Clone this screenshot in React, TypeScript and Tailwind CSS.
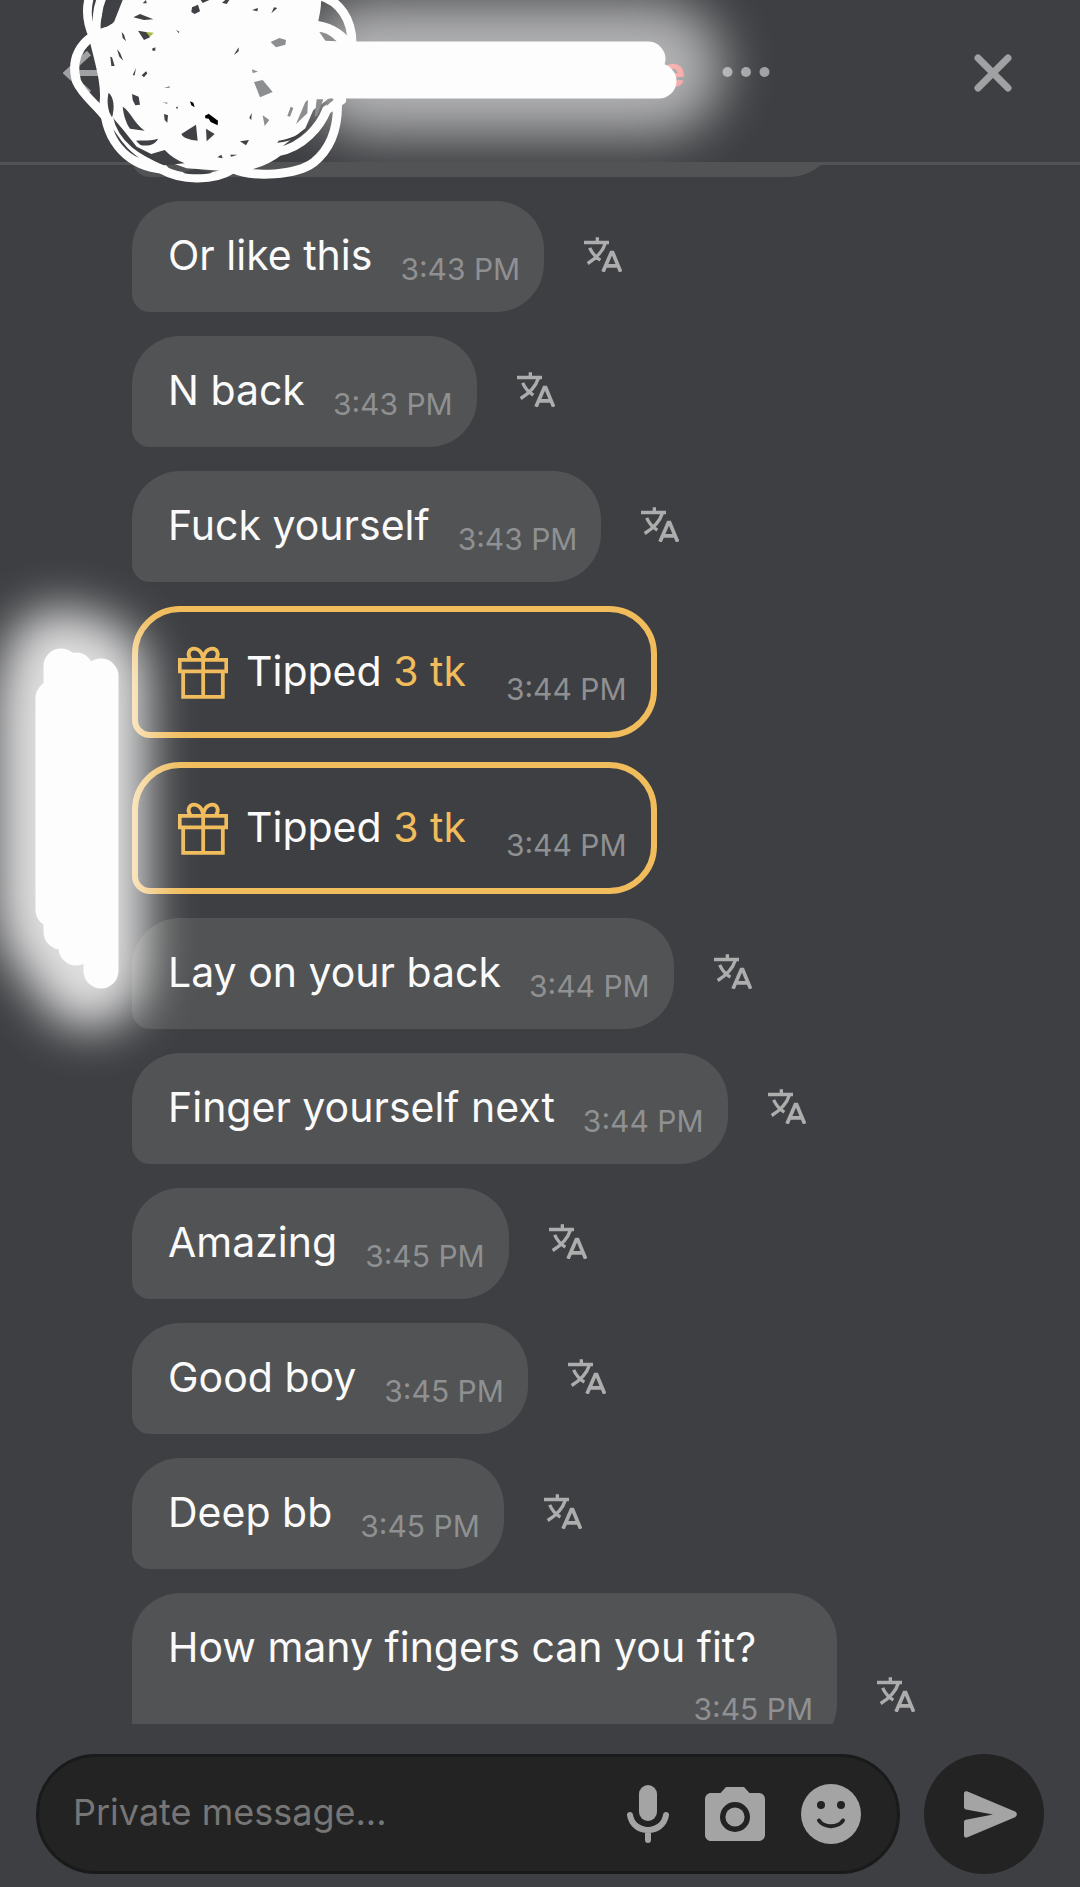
import type { ReactNode } from 'react';

type Message = {
  text: string;
  time: string;
  tip?: string;
};

const messages: Message[] = [
  { text: 'Or like this', time: '3:43 PM' },
  { text: 'N back', time: '3:43 PM' },
  { text: 'Fuck yourself', time: '3:43 PM' },
  { text: 'Tipped', tip: '3 tk', time: '3:44 PM' },
  { text: 'Tipped', tip: '3 tk', time: '3:44 PM' },
  { text: 'Lay on your back', time: '3:44 PM' },
  { text: 'Finger yourself next', time: '3:44 PM' },
  { text: 'Amazing', time: '3:45 PM' },
  { text: 'Good boy', time: '3:45 PM' },
  { text: 'Deep bb', time: '3:45 PM' },
  { text: 'How many fingers can you fit?', time: '3:45 PM' },
];

function TranslateIcon() {
  return (
    <svg viewBox="48 52 114 104" className="w-[38px] h-[35px]" fill="none" stroke="currentColor" strokeWidth="10">
      <path d="M48 68H123M88 52V68M112 70C104 96 86 114 59 131M65 84C72 100 83 112 97 121" />
      <path d="M105 156L130 98H134L158 156M113 138H151" strokeWidth="11" />
    </svg>
  );
}

function GiftIcon() {
  return (
    <svg viewBox="167 169 145 153" className="w-[50px] h-[53px] shrink-0" fill="none" stroke="currentColor" strokeWidth="11">
      <path d="M172 209H307V242H172ZM182 242V316H297V242M240 205V316" />
      <path d="M203 207C192 192 200 176 213 176C228 176 238 190 240 205C242 190 252 176 267 176C280 176 288 192 277 207" />
    </svg>
  );
}

function IconButton({ label, className = '', children }: { label: string; className?: string; children: ReactNode }) {
  return (
    <button type="button" aria-label={label} className={`flex shrink-0 items-center justify-center ${className}`}>
      {children}
    </button>
  );
}

function Time({ value }: { value: string }) {
  return <time className="ml-auto self-end text-[30px] leading-10 text-[#8f9092] whitespace-nowrap">{value}</time>;
}

function TextBubble({ message }: { message: Message }) {
  return (
    <li className="flex items-end">
      <div className="flex flex-wrap gap-x-7 gap-y-4 min-h-[111px] max-w-[705px] pt-[29px] pb-[23px] pl-9 pr-6 bg-[#525354] rounded-[48px] rounded-bl-[18px]">
        <p className="text-[41px] leading-[51px]">{message.text}</p>
        <Time value={message.time} />
      </div>
      <IconButton label="Translate" className="ml-10 h-[111px] pb-1 text-[#adadae]">
        <TranslateIcon />
      </IconButton>
    </li>
  );
}

function TipBubble({ message }: { message: Message }) {
  return (
    <li className="flex">
      <div className="flex h-[132px] pt-[34px] pb-[23px] pl-10 pr-6 border-6 border-[#f0bc5c] rounded-[48px] rounded-bl-[18px]">
        <span className="text-[#f0bc5c]">
          <GiftIcon />
        </span>
        <p className="ml-[18px] mr-10 text-[41px] leading-[51px]">
          {message.text} <span className="text-[#f0bc5c]">{message.tip}</span>
        </p>
        <Time value={message.time} />
      </div>
    </li>
  );
}

// marker strokes hiding the user name
function NameMarker() {
  return (
    <svg viewBox="0 0 800 200" className="absolute left-0 top-0 w-[800px] h-[200px] pointer-events-none" fill="none" strokeLinecap="round" aria-hidden="true">
      <defs>
        <filter id="name-glow" x="0" y="-160" width="860" height="460" filterUnits="userSpaceOnUse" colorInterpolationFilters="sRGB">
          <feGaussianBlur stdDeviation="26" />
        </filter>
        <clipPath id="name-clip">
          <path d="M0 0H800V162H0Z" />
        </clipPath>
      </defs>
      <g clipPath="url(#name-clip)">
        <path d="M370 68H656" stroke="#fff" strokeWidth="134" opacity=".6" filter="url(#name-glow)" />
      </g>
      <path d="M250 59H648M250 81H659" stroke="#fdfdfd" strokeWidth="35" />
    </svg>
  );
}

// scribble over the avatar
function AvatarScribble() {
  return (
    <svg viewBox="0 0 1080 600" className="absolute left-10 top-0 w-[360px] h-[200px] pointer-events-none" aria-hidden="true">
      <path
        fill="#fdfdfd"
        d="M218 70L245 0H806L802 60L850 88L940 125V293H870L820 330L796 385L720 445L660 490L580 515L440 505L370 480L290 440L250 390L220 355L200 260L170 180L160 105Z"
      />
      <g fill="none" stroke="#fdfdfd" strokeWidth="27" strokeLinecap="round">
        <path d="M152 -20C134 30 142 70 160 110C176 180 200 250 192 310C196 430 270 500 372 508" />
        <path d="M192 -20C170 20 168 60 176 120" />
        <path d="M215 92C130 100 88 170 110 245C128 285 165 310 192 345" />
        <path d="M205 350C222 440 300 480 365 508C420 540 520 545 578 507C650 496 690 475 715 455C790 440 840 380 860 330L905 300" />
        <path d="M578 505C640 535 770 525 820 488C880 440 896 370 892 295" />
        <path d="M832 -15C900 0 936 60 936 130" />
        <path d="M810 -15C815 20 812 50 800 80M830 -15C832 20 826 45 818 75" />
        <path d="M832 76C880 84 905 105 935 140" />
      </g>
      <g fill="#404145">
        <path d="M218 0H248L222 66L182 86C180 56 190 22 218 0Z" />
        <path d="M280 52L300 42L340 58L312 60ZM294 92L322 97L330 112L312 120ZM456 22L474 14L480 34L464 42L454 36ZM546 8L556 0H568L560 12ZM482 0H508L488 9ZM308 10L318 0L320 10ZM636 30L654 24L652 34ZM694 40L702 22L712 24Z" />
        <path d="M245 96L252 104L258 124L248 114ZM231 148L240 158L250 182L238 170ZM211 170L216 172L224 198L214 198ZM278 226L288 204L284 226ZM305 226L318 214L322 220L312 232ZM408 90L418 95L416 99ZM336 146L346 142L346 152L338 152ZM582 164L596 142V154L586 162Z" />
        <path d="M276 282L296 290L300 314L286 316L278 300ZM206 278C220 290 226 320 216 352C202 330 200 300 206 278ZM248 320C272 334 282 370 314 392L270 386C256 366 250 340 248 320Z" />
        <path d="M288 422C310 420 330 424 354 416C346 436 318 440 300 434ZM220 388C242 420 262 450 298 474C260 458 232 424 220 388ZM326 464L374 450C392 468 410 480 434 490L372 496C354 488 340 478 326 464Z" />
        <path d="M424 402L468 374L473 422C448 420 430 414 424 402ZM498 386L524 402L500 424ZM372 342L384 346L382 368L374 360ZM428 518L466 506L518 518C490 524 450 524 428 518Z" />
        <path d="M532 472L544 464L548 475ZM570 464L592 464L574 470ZM600 424L627 420L618 436ZM716 422C750 416 776 406 798 386C780 414 744 426 712 428ZM628 354L635 338L634 360Z" />
      </g>
      <g fill="#8d8e90">
        <path d="M692 126L718 114L738 120L736 134L708 142ZM642 246L668 240L698 276L660 292ZM636 208L654 215L638 219ZM372 264L390 258L388 264ZM368 306L384 308L380 312ZM838 96C860 98 874 108 890 124L856 122Z" />
        <path d="M742 348L752 320L760 324L750 350ZM668 346L688 360L674 378ZM796 306L804 300L802 340L768 372ZM830 298H850L832 346L824 350ZM862 298H882L860 318Z" />
      </g>
      <path fill="#000" d="M450 304L460 308L464 322L454 316ZM495 347L506 341L534 362L533 376L512 366L506 356L496 355ZM408 323L413 319L412 327Z" />
      <path fill="#a9b63c" d="M318 96L341 98L330 110Z" />
    </svg>
  );
}

// marker strokes over the avatar column of the chat
function ColumnMarker() {
  const strokes = 'M101 676V971M76 670V948M61 666V932M53 698V910';
  return (
    <svg viewBox="0 520 240 600" className="absolute left-0 top-[520px] w-[240px] h-[600px] pointer-events-none" fill="none" strokeLinecap="round" aria-hidden="true">
      <defs>
        <filter id="column-glow" x="-160" y="460" width="460" height="720" filterUnits="userSpaceOnUse" colorInterpolationFilters="sRGB">
          <feGaussianBlur stdDeviation="24" />
        </filter>
      </defs>
      <g filter="url(#column-glow)" opacity=".84">
        <path d="M90 676V971M76 670V948M61 666V932M53 698V910" stroke="#fff" strokeWidth="114" />
      </g>
      <path d={strokes} stroke="#fdfdfd" strokeWidth="35" />
    </svg>
  );
}

function Header() {
  return (
    <header className="relative z-10 flex h-[165px] shrink-0 items-start border-b-3 border-[#525354] text-[#a0a1a3]">
      <IconButton label="Back" className="ml-[63px] mt-[50px]">
        <svg viewBox="0 0 48 46" className="w-12 h-[46px]" fill="none" stroke="currentColor" strokeWidth="6">
          <path d="M26 3L4 23L26 43M4 23H48" />
        </svg>
      </IconButton>
      <h1 className="w-[574px] mt-[46px] text-right text-[42px] leading-[51px] font-bold text-[#f04a48]">e</h1>
      <IconButton label="More options" className="ml-[37px] mt-[66px]">
        <svg viewBox="0 0 48 12" className="w-12 h-3" fill="currentColor">
          <circle cx="5.5" cy="6" r="5" />
          <circle cx="24" cy="6" r="5" />
          <circle cx="42.5" cy="6" r="5" />
        </svg>
      </IconButton>
      <IconButton label="Close" className="ml-auto mr-[68px] mt-[54px]">
        <svg viewBox="0 0 38 38" className="w-[38px] h-[38px]" fill="none" stroke="currentColor" strokeWidth="7" strokeLinecap="round">
          <path d="M4 4L34 34M34 4L4 34" />
        </svg>
      </IconButton>
      <NameMarker />
      <AvatarScribble />
    </header>
  );
}

function Composer() {
  return (
    <form className="flex shrink-0 gap-6 px-9 pt-[30px] pb-[13px] text-[#a4a4a4]">
      <div className="flex flex-1 min-w-0 h-[120px] items-center gap-9 pl-[34px] pr-9 bg-[#232323] border-3 border-[#191a1a] rounded-full">
        <input
          type="text"
          aria-label="Private message"
          placeholder="Private message..."
          className="flex-1 min-w-0 h-12 mb-1 bg-transparent text-[36px] leading-[48px] text-white placeholder:text-[#767676] outline-none"
        />
        <IconButton label="Record voice message">
          <svg viewBox="0 0 42 58" className="w-[42px] h-[58px]" fill="currentColor">
            <rect x="12" y="0" width="18" height="36" rx="9" />
            <path d="M3 30C6 50 36 50 39 30M21 46V55" fill="none" stroke="currentColor" strokeWidth="6" strokeLinecap="round" />
          </svg>
        </IconButton>
        <IconButton label="Send photo">
          <svg viewBox="2 2 20 18" className="w-[60px] h-[54px]" fill="currentColor">
            <path
              fillRule="evenodd"
              d="M9 2L7.17 4H4C2.9 4 2 4.9 2 6V18C2 19.1 2.9 20 4 20H20C21.1 20 22 19.1 22 18V6C22 4.9 21.1 4 20 4H16.83L15 2ZM12 7A5 5 0 1 1 12 17A5 5 0 1 1 12 7Z"
            />
            <circle cx="12" cy="12" r="3.2" />
          </svg>
        </IconButton>
        <IconButton label="Emoji">
          <svg viewBox="0 0 60 60" className="w-[60px] h-[60px]">
            <circle cx="30" cy="30" r="30" fill="currentColor" />
            <circle cx="20" cy="21" r="4" fill="#232323" />
            <circle cx="40" cy="21" r="4" fill="#232323" />
            <path d="M18 36.5C23 44 37 44 42 36.5" fill="none" stroke="#232323" strokeWidth="4" strokeLinecap="round" />
          </svg>
        </IconButton>
      </div>
      <IconButton label="Send" className="w-[120px] h-[120px] rounded-full bg-[#232323] pl-3">
        <svg viewBox="0 0 53 47" className="w-[53px] h-[47px]" fill="currentColor">
          <path d="M0 2.500C0 .5 1.500-.3 3.500.4L51 20.500C53.500 21.800 53.500 24.800 51 26.200L3.500 46.300C1.500 47 0 46.200 0 44.500V31C0 29.800.7 29 2 28.700L29 23.500L2 18.500C.7 18.200 0 17.200 0 16Z" />
        </svg>
      </IconButton>
    </form>
  );
}

export default function App() {
  return (
    <div className="relative flex flex-col h-screen overflow-hidden bg-[#3e3f42] text-[#fafafa] font-['Inter',sans-serif]">
      <Header />
      <main className="flex-1 min-h-0 overflow-hidden pl-[132px]">
        {/* tail of the message scrolled under the header */}
        <div className="flex h-3 items-end overflow-hidden">
          <div className="w-full max-w-[705px] h-[111px] shrink-0 bg-[#525354] rounded-[48px] rounded-bl-[18px]" />
        </div>
        <ul className="flex flex-col gap-6 pt-6">
          {messages.map((message, i) =>
            message.tip ? <TipBubble key={i} message={message} /> : <TextBubble key={i} message={message} />
          )}
        </ul>
      </main>
      <Composer />
      <ColumnMarker />
    </div>
  );
}
